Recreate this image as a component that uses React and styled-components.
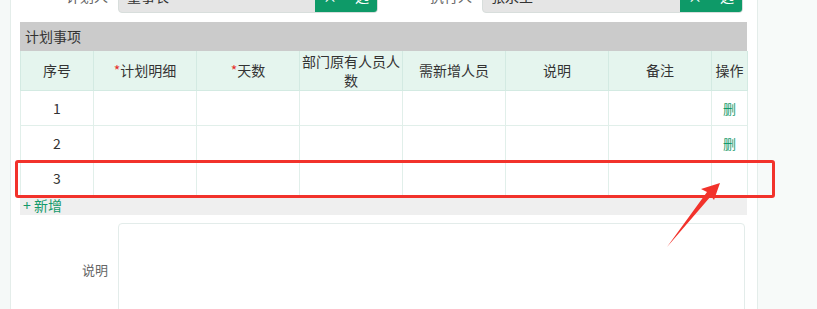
import styled, { createGlobalStyle } from "styled-components"

const GlobalStyle = createGlobalStyle`
  html, body {
    margin: 0;
    padding: 0;
    overflow: hidden;
    background: #f6f9f8;
  }
  body {
    font-family: "Noto Sans CJK SC", "Microsoft YaHei", sans-serif;
    font-size: 14px;
    color: #333;
  }
`

const Page = styled.div`
  position: relative;
  display: flex;
  width: 817px;
  height: 309px;
  overflow: hidden;
`
const SideStrip = styled.div`
  width: 10px;
  flex: none;
  background: #f5f9f8;
`
const Panel = styled.div`
  width: 747px;
  flex: none;
  background: #fff;
  border-left: 1px solid #e4edea;
  padding: 0 10px 0 9px;
  box-sizing: border-box;
`
const RightPane = styled.div`
  flex: 1;
  background: #f7faf9;
  border-left: 1px solid #e4edea;
`
const Content = styled.div`
  margin-top: -21px;
  width: 727px;
`
const FormRow = styled.div`
  display: grid;
  grid-template-columns: 358px 359px;
  column-gap: 6px;
  height: 34px;
  margin-bottom: 9px;
`
const FormItem = styled.div`
  display: flex;
  align-items: center;
`
const Label = styled.div`
  width: 88px;
  padding-right: 10px;
  text-align: right;
  color: #666;
  flex: none;
`
const InputBox = styled.div`
  display: flex;
  width: 261px;
  height: 34px;
  border-radius: 4px;
  overflow: hidden;
  background: #e5e5e5;
  border: 1px solid #d8dedc;
  box-sizing: border-box;
`
const InputText = styled.div`
  flex: 1;
  padding-left: 8px;
  line-height: 32px;
  color: #333;
`
const PickButton = styled.div`
  width: 62px;
  background: #0e9a68;
  color: #fff;
  display: flex;
  align-items: center;
  justify-content: center;
  gap: 18px;
`
const SectionTitle = styled.div`
  height: 29px;
  line-height: 29px;
  background: #cbcbcb;
  padding-left: 5px;
  color: #333;
`
const Table = styled.table`
  width: 727px;
  border-collapse: collapse;
  table-layout: fixed;
`
const Th = styled.th`
  height: 39px;
  background: #e5f5ee;
  font-weight: normal;
  color: #333;
  text-align: center;
  padding: 0 2px;
  line-height: 19px;
  border: 1px solid #d3eae2;
  border-top: none;
  white-space: ${p => (p.$nowrap ? "nowrap" : "normal")};
`
const Td = styled.td`
  height: 34px;
  padding: 0;
  text-align: center;
  border: 1px solid #e1efea;
  color: #333;
`
const Req = styled.span`
  color: #e5302c;
`
const DeleteLink = styled.span`
  color: #149a6b;
  font-size: 13px;
`
const AddRow = styled.div`
  height: 19px;
  line-height: 19px;
  background: #efefef;
  color: #149a6b;
  padding-left: 3px;
`
const NoteRow = styled.div`
  display: flex;
  margin-top: 8px;
`
const NoteLabel = styled.div`
  width: 88px;
  padding-right: 10px;
  text-align: right;
  color: #666;
  font-size: 13px;
  padding-top: 37px;
  flex: none;
`
const TextArea = styled.div`
  width: 625px;
  height: 110px;
  border: 1px solid #e3ecea;
  border-radius: 4px;
`
const HighlightBox = styled.div`
  position: absolute;
  left: 15px;
  top: 160px;
  width: 760px;
  height: 38px;
  border: 3px solid #f2322b;
  border-radius: 3px;
  box-sizing: border-box;
`
const ArrowLayer = styled.svg`
  position: absolute;
  left: 0;
  top: 0;
  pointer-events: none;
`

const columns = [
  { w: 73, title: "序号" },
  { w: 103, title: "计划明细", req: true },
  { w: 103, title: "天数", req: true },
  { w: 103, title: "部门原有人员人数" },
  { w: 103, title: "需新增人员" },
  { w: 103, title: "说明" },
  { w: 103, title: "备注" },
  { w: 36, title: "操作", nowrap: true },
]

const rows = [
  { no: 1, del: true },
  { no: 2, del: true },
  { no: 3, del: false },
]

const App = () => {
  return (
    <>
      <GlobalStyle />
      <Page>
        <SideStrip />
        <Panel>
          <Content>
            <FormRow>
              <FormItem>
                <Label>计划人</Label>
                <InputBox>
                  <InputText>董事长</InputText>
                  <PickButton><span>×</span><span>选</span></PickButton>
                </InputBox>
              </FormItem>
              <FormItem>
                <Label>执行人</Label>
                <InputBox>
                  <InputText>张永生</InputText>
                  <PickButton><span>×</span><span>选</span></PickButton>
                </InputBox>
              </FormItem>
            </FormRow>
            <SectionTitle>计划事项</SectionTitle>
            <Table>
              <colgroup>
                {columns.map((c, i) => <col key={i} style={{ width: c.w }} />)}
              </colgroup>
              <thead>
                <tr>
                  {columns.map((c, i) => (
                    <Th key={i} $nowrap={c.nowrap}>{c.req && <Req>*</Req>}{c.title}</Th>
                  ))}
                </tr>
              </thead>
              <tbody>
                {rows.map(r => (
                  <tr key={r.no}>
                    <Td>{r.no}</Td>
                    <Td />
                    <Td />
                    <Td />
                    <Td />
                    <Td />
                    <Td />
                    <Td>{r.del && <DeleteLink>删</DeleteLink>}</Td>
                  </tr>
                ))}
              </tbody>
            </Table>
            <AddRow>+ 新增</AddRow>
            <NoteRow>
              <NoteLabel>说明</NoteLabel>
              <TextArea />
            </NoteRow>
          </Content>
        </Panel>
        <RightPane />
        <HighlightBox />
        <ArrowLayer width="817" height="309" viewBox="0 0 817 309">
          <polygon
            points="720,183 701,189 707,192 667,247 711,196 714,200"
            fill="#f2322b"
          />
        </ArrowLayer>
      </Page>
    </>
  )
}

export default App
